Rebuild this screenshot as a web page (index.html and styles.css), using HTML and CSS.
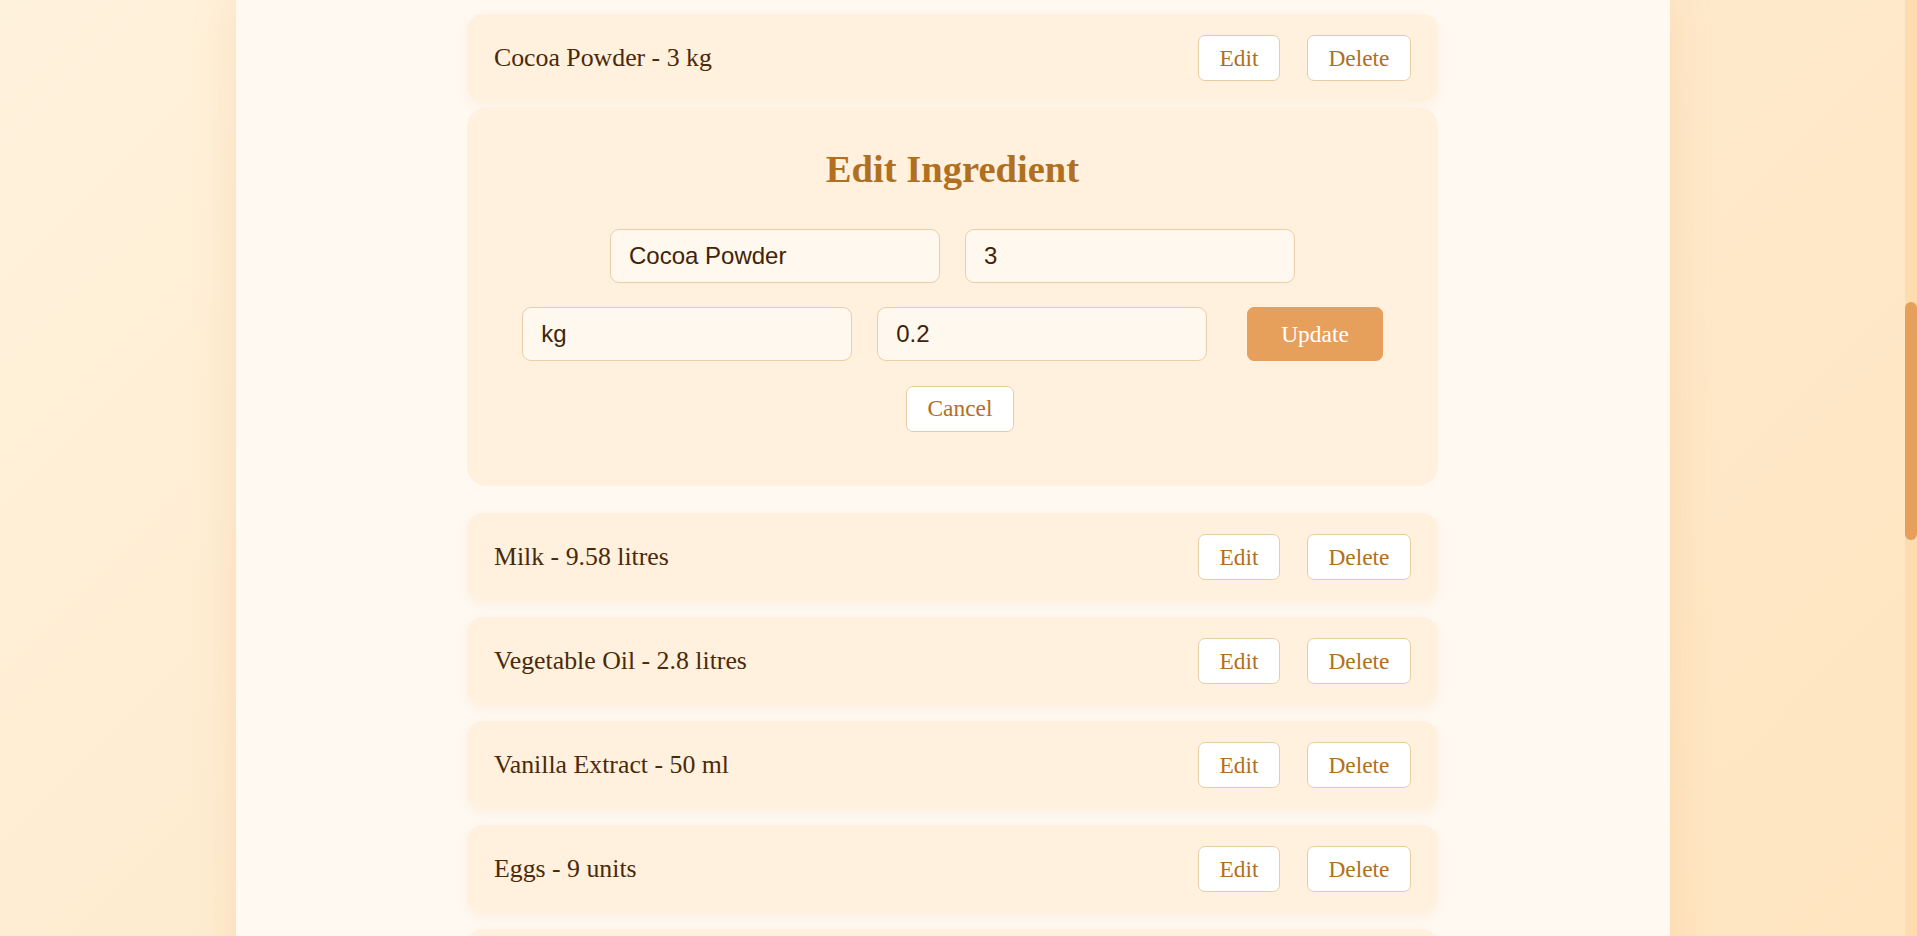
FILE: index.html
```html
<!DOCTYPE html>
<html lang="en">
<head>
<meta charset="utf-8">
<title>Ingredients</title>
<link rel="stylesheet" href="styles.css">
</head>
<body>
<div class="viewport">
  <main class="page">
    <ul class="ingredient-list">
      <li class="ingredient ingredient--editing">
        <span class="ingredient__label">Cocoa Powder - 3 kg</span>
        <div class="ingredient__actions">
          <button class="btn" type="button">Edit</button>
          <button class="btn" type="button">Delete</button>
        </div>
      </li>
      <li class="edit-panel">
        <h2 class="edit-panel__title">Edit Ingredient</h2>
        <form class="edit-form">
          <input class="field" type="text" value="Cocoa Powder">
          <input class="field" type="text" value="3">
          <input class="field" type="text" value="kg">
          <input class="field" type="text" value="0.2">
          <button class="btn btn--primary" type="button">Update</button>
          <button class="btn btn--cancel" type="button">Cancel</button>
        </form>
      </li>
      <li class="ingredient">
        <span class="ingredient__label">Milk - 9.58 litres</span>
        <div class="ingredient__actions">
          <button class="btn" type="button">Edit</button>
          <button class="btn" type="button">Delete</button>
        </div>
      </li>
      <li class="ingredient">
        <span class="ingredient__label">Vegetable Oil - 2.8 litres</span>
        <div class="ingredient__actions">
          <button class="btn" type="button">Edit</button>
          <button class="btn" type="button">Delete</button>
        </div>
      </li>
      <li class="ingredient">
        <span class="ingredient__label">Vanilla Extract - 50 ml</span>
        <div class="ingredient__actions">
          <button class="btn" type="button">Edit</button>
          <button class="btn" type="button">Delete</button>
        </div>
      </li>
      <li class="ingredient">
        <span class="ingredient__label">Eggs - 9 units</span>
        <div class="ingredient__actions">
          <button class="btn" type="button">Edit</button>
          <button class="btn" type="button">Delete</button>
        </div>
      </li>
      <li class="ingredient ingredient--partial" aria-hidden="true"></li>
    </ul>
  </main>
  <div class="scrollbar">
    <div class="scrollbar__thumb"></div>
  </div>
</div>
</body>
</html>
```

FILE: styles.css
```css
* {
  box-sizing: border-box;
}

html, body {
  margin: 0;
  padding: 0;
  height: 100%;
}

body {
  font-family: "Liberation Serif", "Times New Roman", serif;
  background: linear-gradient(135deg, #fff2dc 0%, #fee9cb 60%, #ffe5c0 100%);
  overflow: hidden;
}

.viewport {
  display: flex;
  height: 100vh;
}

.page {
  flex: 1;
  min-width: 0;
  height: 100%;
  overflow: hidden;
}

.ingredient-list {
  list-style: none;
  margin: 0 auto;
  padding: 14px 0 40px;
  width: 1434px;
  min-height: 100%;
  background: #fff9f2;
  box-shadow: 0 0 40px rgba(232, 160, 80, 0.22);
  display: flex;
  flex-direction: column;
  align-items: center;
}

.ingredient {
  width: 971px;
  height: 88px;
  flex: none;
  display: flex;
  align-items: center;
  justify-content: space-between;
  padding: 0 27px 0 27px;
  margin-bottom: 16px;
  background: #fff1de;
  border-radius: 16px;
  box-shadow: 0 4px 12px rgba(230, 160, 92, 0.1);
}

.ingredient--editing {
  margin-bottom: 4.5px;
}

.ingredient__label {
  font-size: 25.8px;
  color: #4a2a0a;
}

.ingredient__actions {
  display: flex;
  gap: 27px;
}

.btn {
  font-family: "Liberation Serif", "Times New Roman", serif;
  font-size: 23.4px;
  line-height: normal;
  padding: 8.5px 20.5px;
  border: 1px solid #e8cca4;
  border-radius: 7px;
  background: #ffffff;
  color: #b0701f;
  cursor: pointer;
}

.edit-panel {
  width: 971px;
  flex: none;
  background: #fff1de;
  border-radius: 20px;
  padding: 40px 24px 54px;
  margin-bottom: 27.5px;
  text-align: center;
}

.edit-panel__title {
  margin: 0 0 38px;
  font-size: 38.6px;
  font-weight: bold;
  color: #b0701f;
}

.edit-form {
  display: flex;
  flex-wrap: wrap;
  justify-content: center;
  gap: 24.5px 25px;
}

.field {
  flex: none;
  width: 330px;
  font-family: "Liberation Sans", Arial, sans-serif;
  font-size: 24px;
  line-height: normal;
  padding: 12px 18px;
  border: 1px solid #e8cfa8;
  border-radius: 9px;
  background: #fff8ee;
  color: #3f2408;
  outline: none;
}

.btn--primary {
  margin-left: 15px;
  padding: 0 33px;
  background: #e6a05c;
  border-color: #e6a05c;
  color: #ffffff;
}

.btn--cancel {
  margin-left: 15px;
}

.scrollbar {
  flex: none;
  width: 12px;
  height: 100%;
  background: #fddcb0;
}

.scrollbar__thumb {
  margin-top: 302px;
  height: 238px;
  border-radius: 6px;
  background: #e6a05c;
}
```
